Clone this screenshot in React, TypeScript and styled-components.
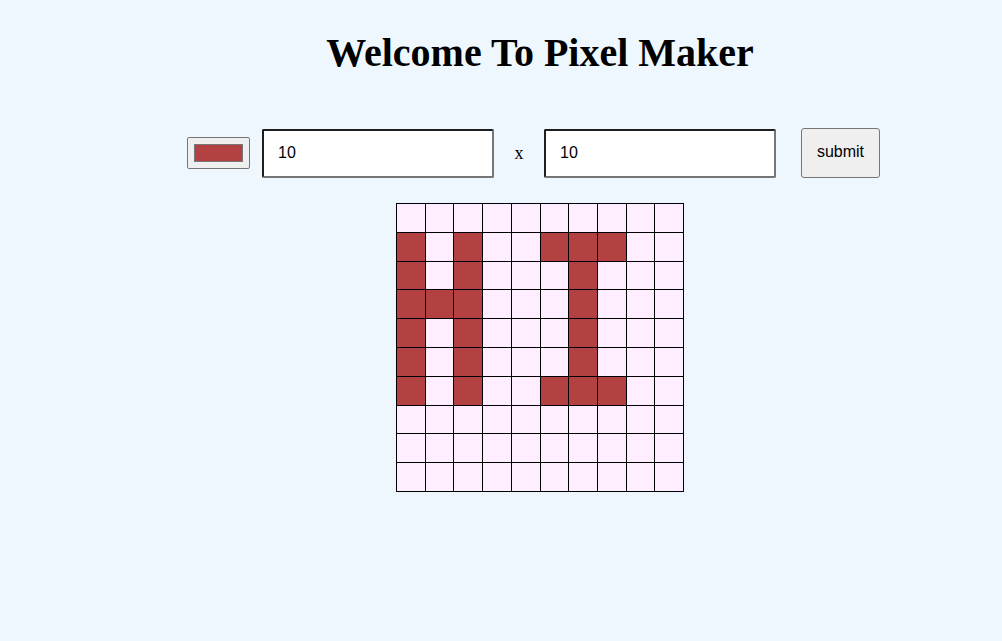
import React from "react";
import styled, { createGlobalStyle } from "styled-components";

const GlobalStyle = createGlobalStyle`
  html, body { margin: 0; padding: 0; }
  body {
    background: #eff7fe;
    font-family: "Liberation Serif", "Times New Roman", serif;
    min-height: 641px;
  }
`;

const Page = styled.div`
  display: flex;
  flex-direction: column;
  align-items: center;
  padding: 30px 0 0 78px;
`;

const Title = styled.h1`
  margin: 0;
  font-family: "Liberation Serif", "Times New Roman", serif;
  font-weight: bold;
  font-size: 40px;
  line-height: 46px;
  color: #000;
`;

const Controls = styled.div`
  display: flex;
  align-items: center;
  margin-top: 52px;
  margin-right: 13px;
`;

const ColorPicker = styled.input`
  -webkit-appearance: none;
  appearance: none;
  box-sizing: border-box;
  width: 63px;
  height: 32px;
  padding: 0;
  margin: 0 12px 0 0;
  border: 1px solid #767676;
  border-radius: 2px;
  background: #efefef;
  cursor: pointer;
  &::-webkit-color-swatch-wrapper { padding: 6px; }
  &::-webkit-color-swatch { border: 1px solid #777; border-radius: 0; }
`;

const SizeInput = styled.input`
  box-sizing: border-box;
  width: 232px;
  height: 49px;
  margin: 0;
  padding: 0 14px;
  border-width: 2px;
  border-style: solid;
  border-color: #1e1e1e #767676 #767676 #1e1e1e;
  border-radius: 2px;
  background: #fff;
  font-family: "Liberation Sans", Arial, sans-serif;
  font-size: 16px;
  color: #000;
  outline: none;
`;

const Times = styled.span`
  width: 50px;
  text-align: center;
  font-family: "Liberation Serif", "Times New Roman", serif;
  font-size: 18px;
  color: #000;
`;

const Submit = styled.button`
  box-sizing: border-box;
  width: 79px;
  height: 50px;
  margin-left: 25px;
  padding: 0 0 2px;
  border: 1px solid #767676;
  border-radius: 3px;
  background: #efefef;
  font-family: "Liberation Sans", Arial, sans-serif;
  font-size: 16px;
  color: #000;
  cursor: pointer;
`;

const Grid = styled.div`
  margin-top: 25px;
  display: grid;
  grid-template-columns: repeat(10, 28.7px);
  grid-auto-rows: 28.8px;
  border-left: 1px solid #000;
  border-top: 1px solid #000;
`;

const Cell = styled.div<{ $filled: boolean }>`
  border-right: 1px solid #000;
  border-bottom: 1px solid #000;
  background: ${(p) => (p.$filled ? "#b44141" : "#ffeeff")};
`;

const filled: Record<number, number[]> = {
  1: [0, 2, 5, 6, 7],
  2: [0, 2, 6],
  3: [0, 1, 2, 6],
  4: [0, 2, 6],
  5: [0, 2, 6],
  6: [0, 2, 5, 6, 7],
};

export default function App() {
  const rows = Array.from({ length: 10 }, (_, r) => r);
  const cols = Array.from({ length: 10 }, (_, c) => c);
  return (
    <>
      <GlobalStyle />
      <Page>
        <Title>Welcome To Pixel Maker</Title>
        <Controls>
          <ColorPicker type="color" defaultValue="#b44141" />
          <SizeInput type="number" defaultValue="10" />
          <Times>x</Times>
          <SizeInput type="number" defaultValue="10" />
          <Submit type="button">submit</Submit>
        </Controls>
        <Grid>
          {rows.map((r) =>
            cols.map((c) => (
              <Cell key={`${r}-${c}`} $filled={(filled[r] || []).includes(c)} />
            ))
          )}
        </Grid>
      </Page>
    </>
  );
}
